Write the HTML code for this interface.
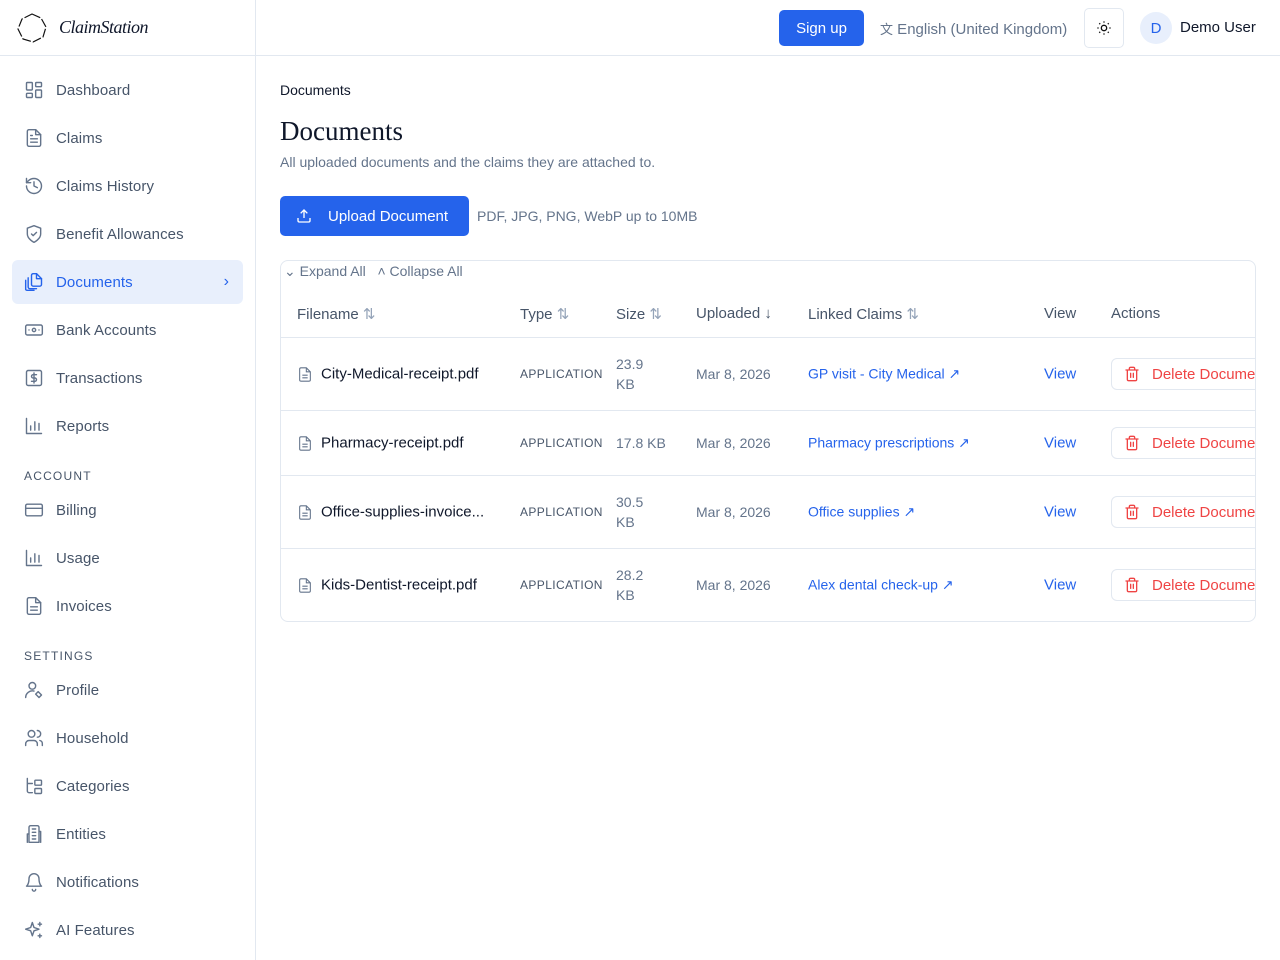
<!DOCTYPE html><html><head><style>
*{box-sizing:border-box;margin:0;padding:0}
body{width:1280px;height:960px;font-family:"Liberation Sans",sans-serif;background:#fff;position:relative;overflow:hidden;color:#0f172a}
.sb{position:absolute;left:0;top:0;width:256px;height:960px;border-right:1px solid #e2e8f0}
.logo{height:56px;border-bottom:1px solid #e2e8f0;display:flex;align-items:center;padding-left:17px}
.logo span{font-family:"Liberation Serif",serif;font-style:italic;font-size:18px;margin-left:12px;letter-spacing:-.5px}
.it{position:absolute;left:12px;width:231px;height:44px;display:flex;align-items:center;padding-left:12px;font-size:15px;color:#475569;letter-spacing:.1px}
.it svg{width:20px;height:20px;margin-right:12px;stroke:#64748b;fill:none;stroke-width:1.7;stroke-linecap:round;stroke-linejoin:round}
.it.a{background:#e8effc;color:#2563eb;border-radius:6px}.it.a svg{stroke:#2563eb}
.sec{position:absolute;left:24px;font-size:12px;color:#475569;letter-spacing:1.2px}
.top{position:absolute;left:256px;top:0;right:0;height:56px;border-bottom:1px solid #e2e8f0}
.t{position:absolute;white-space:nowrap}
.tbl{position:absolute;left:280px;top:260px;width:976px;height:362px;border:1px solid #e2e8f0;border-radius:8px;overflow:hidden}
.hd{color:#475569;font-size:15px}
.row{position:absolute;left:0;width:976px;border-top:1px solid #e2e8f0}
.c{position:absolute;font-size:15px;top:50%;transform:translateY(-50%);white-space:nowrap;display:flex;align-items:center}
.ty{font-size:12px;color:#475569;letter-spacing:.4px}
.lk{color:#2563eb}
.del{position:absolute;left:830px;top:50%;transform:translateY(-50%);width:170px;height:32px;border:1px solid #e2e8f0;border-radius:6px;color:#ef4444;font-size:15px;display:flex;align-items:center;padding-left:12px;white-space:nowrap;overflow:hidden}
.fi{width:16px;height:16px;margin-right:8px;fill:none;stroke:#64748b;stroke-width:1.6}
.tr{width:16px;height:16px;margin-right:12px;fill:none;stroke:#ef4444;stroke-width:2;stroke-linecap:round}
</style></head><body>
<div class="sb">
<div class="logo"><svg width="30" height="30" viewBox="0 0 30 30"><path d="M15 1 L24 5 L29 14 L26 24 L16 29 L6 26 L1 16 L5 6 Z" fill="none" stroke="#111" stroke-width="1.2" stroke-dasharray="9 2"/></svg><span>ClaimStation</span></div>
<div class="it" style="top:68px"><svg viewBox="0 0 24 24"><rect x="3" y="3" width="7" height="9" rx="1"/><rect x="14" y="3" width="7" height="5" rx="1"/><rect x="14" y="12" width="7" height="9" rx="1"/><rect x="3" y="16" width="7" height="5" rx="1"/></svg>Dashboard</div>
<div class="it" style="top:116px"><svg viewBox="0 0 24 24"><path d="M14 2H6a2 2 0 0 0-2 2v16a2 2 0 0 0 2 2h12a2 2 0 0 0 2-2V8z"/><path d="M14 2v6h6M16 13H8M16 17H8M10 9H8"/></svg>Claims</div>
<div class="it" style="top:164px"><svg viewBox="0 0 24 24"><path d="M3 12a9 9 0 1 0 9-9 9.75 9.75 0 0 0-6.74 2.74L3 8"/><path d="M3 3v5h5M12 7v5l4 2"/></svg>Claims History</div>
<div class="it" style="top:212px"><svg viewBox="0 0 24 24"><path d="M12 22s8-4 8-10V5l-8-3-8 3v7c0 6 8 10 8 10z"/><path d="m9 12 2 2 4-4"/></svg>Benefit Allowances</div>
<div class="it a" style="top:260px"><svg viewBox="0 0 24 24"><path d="M15 2h-4a2 2 0 0 0-2 2v11a2 2 0 0 0 2 2h8a2 2 0 0 0 2-2V8z"/><path d="M15 2v6h6M5 7v11a2 2 0 0 0 2 2h8M2 10v11a2 2 0 0 0 2 1h8"/></svg>Documents<span style="position:absolute;right:14px;font-size:16px">›</span></div>
<div class="it" style="top:308px"><svg viewBox="0 0 24 24"><rect x="2" y="6" width="20" height="12" rx="2"/><circle cx="12" cy="12" r="2"/><path d="M6 12h.01M18 12h.01"/></svg>Bank Accounts</div>
<div class="it" style="top:356px"><svg viewBox="0 0 24 24"><rect x="3" y="3" width="18" height="18" rx="2"/><path d="M15 8h-4a2 2 0 0 0 0 4h2a2 2 0 0 1 0 4H9M12 6v12"/></svg>Transactions</div>
<div class="it" style="top:404px"><svg viewBox="0 0 24 24"><path d="M3 3v18h18M8 17v-5M13 17V7M18 17v-8"/></svg>Reports</div>
<div class="sec" style="top:469px">ACCOUNT</div>
<div class="it" style="top:488px"><svg viewBox="0 0 24 24"><rect x="2" y="5" width="20" height="14" rx="2"/><path d="M2 10h20"/></svg>Billing</div>
<div class="it" style="top:536px"><svg viewBox="0 0 24 24"><path d="M3 3v18h18M8 17v-5M13 17V7M18 17v-8"/></svg>Usage</div>
<div class="it" style="top:584px"><svg viewBox="0 0 24 24"><path d="M14 2H6a2 2 0 0 0-2 2v16a2 2 0 0 0 2 2h12a2 2 0 0 0 2-2V8z"/><path d="M14 2v6h6M16 13H8M16 17H8"/></svg>Invoices</div>
<div class="sec" style="top:649px">SETTINGS</div>
<div class="it" style="top:668px"><svg viewBox="0 0 24 24"><circle cx="10" cy="7" r="4"/><path d="M2 21a8 8 0 0 1 10-7.7M17 14l4 4-3 3-4-4z"/></svg>Profile</div>
<div class="it" style="top:716px"><svg viewBox="0 0 24 24"><circle cx="9" cy="7" r="4"/><path d="M2 21v-2a4 4 0 0 1 4-4h6a4 4 0 0 1 4 4v2M16 3a4 4 0 0 1 0 8M22 21v-2a4 4 0 0 0-3-4"/></svg>Household</div>
<div class="it" style="top:764px"><svg viewBox="0 0 24 24"><path d="M4 3v15a2 2 0 0 0 2 2h4M4 9h6"/><rect x="13" y="5" width="8" height="6" rx="1"/><rect x="13" y="15" width="8" height="6" rx="1"/></svg>Categories</div>
<div class="it" style="top:812px"><svg viewBox="0 0 24 24"><path d="M6 22V4a2 2 0 0 1 2-2h8a2 2 0 0 1 2 2v18zM6 12H4v10M18 9h2v13M10 6h4M10 10h4M10 14h4M10 18h4"/></svg>Entities</div>
<div class="it" style="top:860px"><svg viewBox="0 0 24 24"><path d="M6 8a6 6 0 0 1 12 0c0 7 3 9 3 9H3s3-2 3-9M10 21a2 2 0 0 0 4 0"/></svg>Notifications</div>
<div class="it" style="top:908px"><svg viewBox="0 0 24 24"><path d="M10 3l2 6 6 2-6 2-2 6-2-6-6-2 6-2zM19 3v4M17 5h4M19 17v4M17 19h4"/></svg>AI Features</div>
</div>
<div class="top">
<div class="t" style="left:523px;top:10px;width:85px;height:36px;background:#2563eb;border-radius:5px;color:#fff;font-size:15px;display:flex;align-items:center;justify-content:center">Sign up</div>
<div class="t" style="left:624px;top:19px;font-size:15px;color:#64748b"><span style="font-size:13px">文</span> English (United Kingdom)</div>
<div class="t" style="left:828px;top:8px;width:40px;height:40px;border:1px solid #e2e8f0;border-radius:5px;display:flex;align-items:center;justify-content:center"><svg width="16" height="16" viewBox="0 0 24 24" fill="none" stroke="#111" stroke-width="2"><circle cx="12" cy="12" r="4"/><path d="M12 2v2M12 20v2M4.9 4.9l1.4 1.4M17.7 17.7l1.4 1.4M2 12h2M20 12h2M4.9 19.1l1.4-1.4M17.7 6.3l1.4-1.4"/></svg></div>
<div class="t" style="left:884px;top:12px;width:32px;height:32px;border-radius:50%;background:#e8effc;color:#2563eb;font-size:15px;display:flex;align-items:center;justify-content:center">D</div>
<div class="t" style="left:924px;top:19px;font-size:15px;color:#0f172a">Demo User</div>
</div>
<div class="t" style="left:280px;top:82px;font-size:14px">Documents</div>
<div class="t" style="left:280px;top:116px;font-family:'Liberation Serif',serif;font-size:27px">Documents</div>
<div class="t" style="left:280px;top:154px;font-size:14px;color:#64748b">All uploaded documents and the claims they are attached to.</div>
<div class="t" style="left:280px;top:196px;width:189px;height:40px;background:#2563eb;border-radius:5px;color:#fff;font-size:15px;display:flex;align-items:center;padding-left:16px"><svg width="16" height="16" viewBox="0 0 24 24" fill="none" stroke="#fff" stroke-width="2" style="margin-right:16px"><path d="M21 15v4a2 2 0 0 1-2 2H5a2 2 0 0 1-2-2v-4M17 8l-5-5-5 5M12 3v12"/></svg>Upload Document</div>
<div class="t" style="left:477px;top:208px;font-size:14px;color:#64748b">PDF, JPG, PNG, WebP up to 10MB</div>
<div class="tbl">
<div class="t" style="left:3px;top:2px;font-size:14px;color:#64748b">⌄ Expand All &nbsp; ˄ Collapse All</div>
<div class="t hd" style="left:16px;top:44px">Filename <span style="color:#94a3b8">⇅</span></div>
<div class="t hd" style="left:239px;top:44px">Type <span style="color:#94a3b8">⇅</span></div>
<div class="t hd" style="left:335px;top:44px">Size <span style="color:#94a3b8">⇅</span></div>
<div class="t hd" style="left:415px;top:44px">Uploaded ↓</div>
<div class="t hd" style="left:527px;top:44px">Linked Claims <span style="color:#94a3b8">⇅</span></div>
<div class="t hd" style="left:763px;top:44px">View</div>
<div class="t hd" style="left:830px;top:44px">Actions</div>

<div class="row" style="top:76px;height:73px">
<div class="c" style="left:16px"><svg class="fi" viewBox="0 0 24 24"><path d="M14 2H6a2 2 0 0 0-2 2v16a2 2 0 0 0 2 2h12a2 2 0 0 0 2-2V8z"/><path d="M14 2v6h6M16 13H8M16 17H8"/></svg>City-Medical-receipt.pdf</div>
<div class="c ty" style="left:239px">APPLICATION</div>
<div class="c" style="left:335px;color:#64748b;font-size:14px;line-height:20px">23.9<br>KB</div>
<div class="c" style="left:415px;color:#64748b;font-size:14px">Mar 8, 2026</div>
<div class="c lk" style="left:527px;font-size:14px">GP visit - City Medical ↗</div>
<div class="c lk" style="left:763px">View</div>
<div class="del"><svg class="tr" viewBox="0 0 24 24"><path d="M3 6h18M19 6v14a2 2 0 0 1-2 2H7a2 2 0 0 1-2-2V6M8 6V4a2 2 0 0 1 2-2h4a2 2 0 0 1 2 2v2M10 11v6M14 11v6"/></svg>Delete Document</div>
</div>
<div class="row" style="top:149px;height:65px">
<div class="c" style="left:16px"><svg class="fi" viewBox="0 0 24 24"><path d="M14 2H6a2 2 0 0 0-2 2v16a2 2 0 0 0 2 2h12a2 2 0 0 0 2-2V8z"/><path d="M14 2v6h6M16 13H8M16 17H8"/></svg>Pharmacy-receipt.pdf</div>
<div class="c ty" style="left:239px">APPLICATION</div>
<div class="c" style="left:335px;color:#64748b;font-size:14px">17.8 KB</div>
<div class="c" style="left:415px;color:#64748b;font-size:14px">Mar 8, 2026</div>
<div class="c lk" style="left:527px;font-size:14px">Pharmacy prescriptions ↗</div>
<div class="c lk" style="left:763px">View</div>
<div class="del"><svg class="tr" viewBox="0 0 24 24"><path d="M3 6h18M19 6v14a2 2 0 0 1-2 2H7a2 2 0 0 1-2-2V6M8 6V4a2 2 0 0 1 2-2h4a2 2 0 0 1 2 2v2M10 11v6M14 11v6"/></svg>Delete Document</div>
</div>
<div class="row" style="top:214px;height:73px">
<div class="c" style="left:16px"><svg class="fi" viewBox="0 0 24 24"><path d="M14 2H6a2 2 0 0 0-2 2v16a2 2 0 0 0 2 2h12a2 2 0 0 0 2-2V8z"/><path d="M14 2v6h6M16 13H8M16 17H8"/></svg>Office-supplies-invoice...</div>
<div class="c ty" style="left:239px">APPLICATION</div>
<div class="c" style="left:335px;color:#64748b;font-size:14px;line-height:20px">30.5<br>KB</div>
<div class="c" style="left:415px;color:#64748b;font-size:14px">Mar 8, 2026</div>
<div class="c lk" style="left:527px;font-size:14px">Office supplies ↗</div>
<div class="c lk" style="left:763px">View</div>
<div class="del"><svg class="tr" viewBox="0 0 24 24"><path d="M3 6h18M19 6v14a2 2 0 0 1-2 2H7a2 2 0 0 1-2-2V6M8 6V4a2 2 0 0 1 2-2h4a2 2 0 0 1 2 2v2M10 11v6M14 11v6"/></svg>Delete Document</div>
</div>
<div class="row" style="top:287px;height:73px">
<div class="c" style="left:16px"><svg class="fi" viewBox="0 0 24 24"><path d="M14 2H6a2 2 0 0 0-2 2v16a2 2 0 0 0 2 2h12a2 2 0 0 0 2-2V8z"/><path d="M14 2v6h6M16 13H8M16 17H8"/></svg>Kids-Dentist-receipt.pdf</div>
<div class="c ty" style="left:239px">APPLICATION</div>
<div class="c" style="left:335px;color:#64748b;font-size:14px;line-height:20px">28.2<br>KB</div>
<div class="c" style="left:415px;color:#64748b;font-size:14px">Mar 8, 2026</div>
<div class="c lk" style="left:527px;font-size:14px">Alex dental check-up ↗</div>
<div class="c lk" style="left:763px">View</div>
<div class="del"><svg class="tr" viewBox="0 0 24 24"><path d="M3 6h18M19 6v14a2 2 0 0 1-2 2H7a2 2 0 0 1-2-2V6M8 6V4a2 2 0 0 1 2-2h4a2 2 0 0 1 2 2v2M10 11v6M14 11v6"/></svg>Delete Document</div>
</div>
</div>
</body></html>
